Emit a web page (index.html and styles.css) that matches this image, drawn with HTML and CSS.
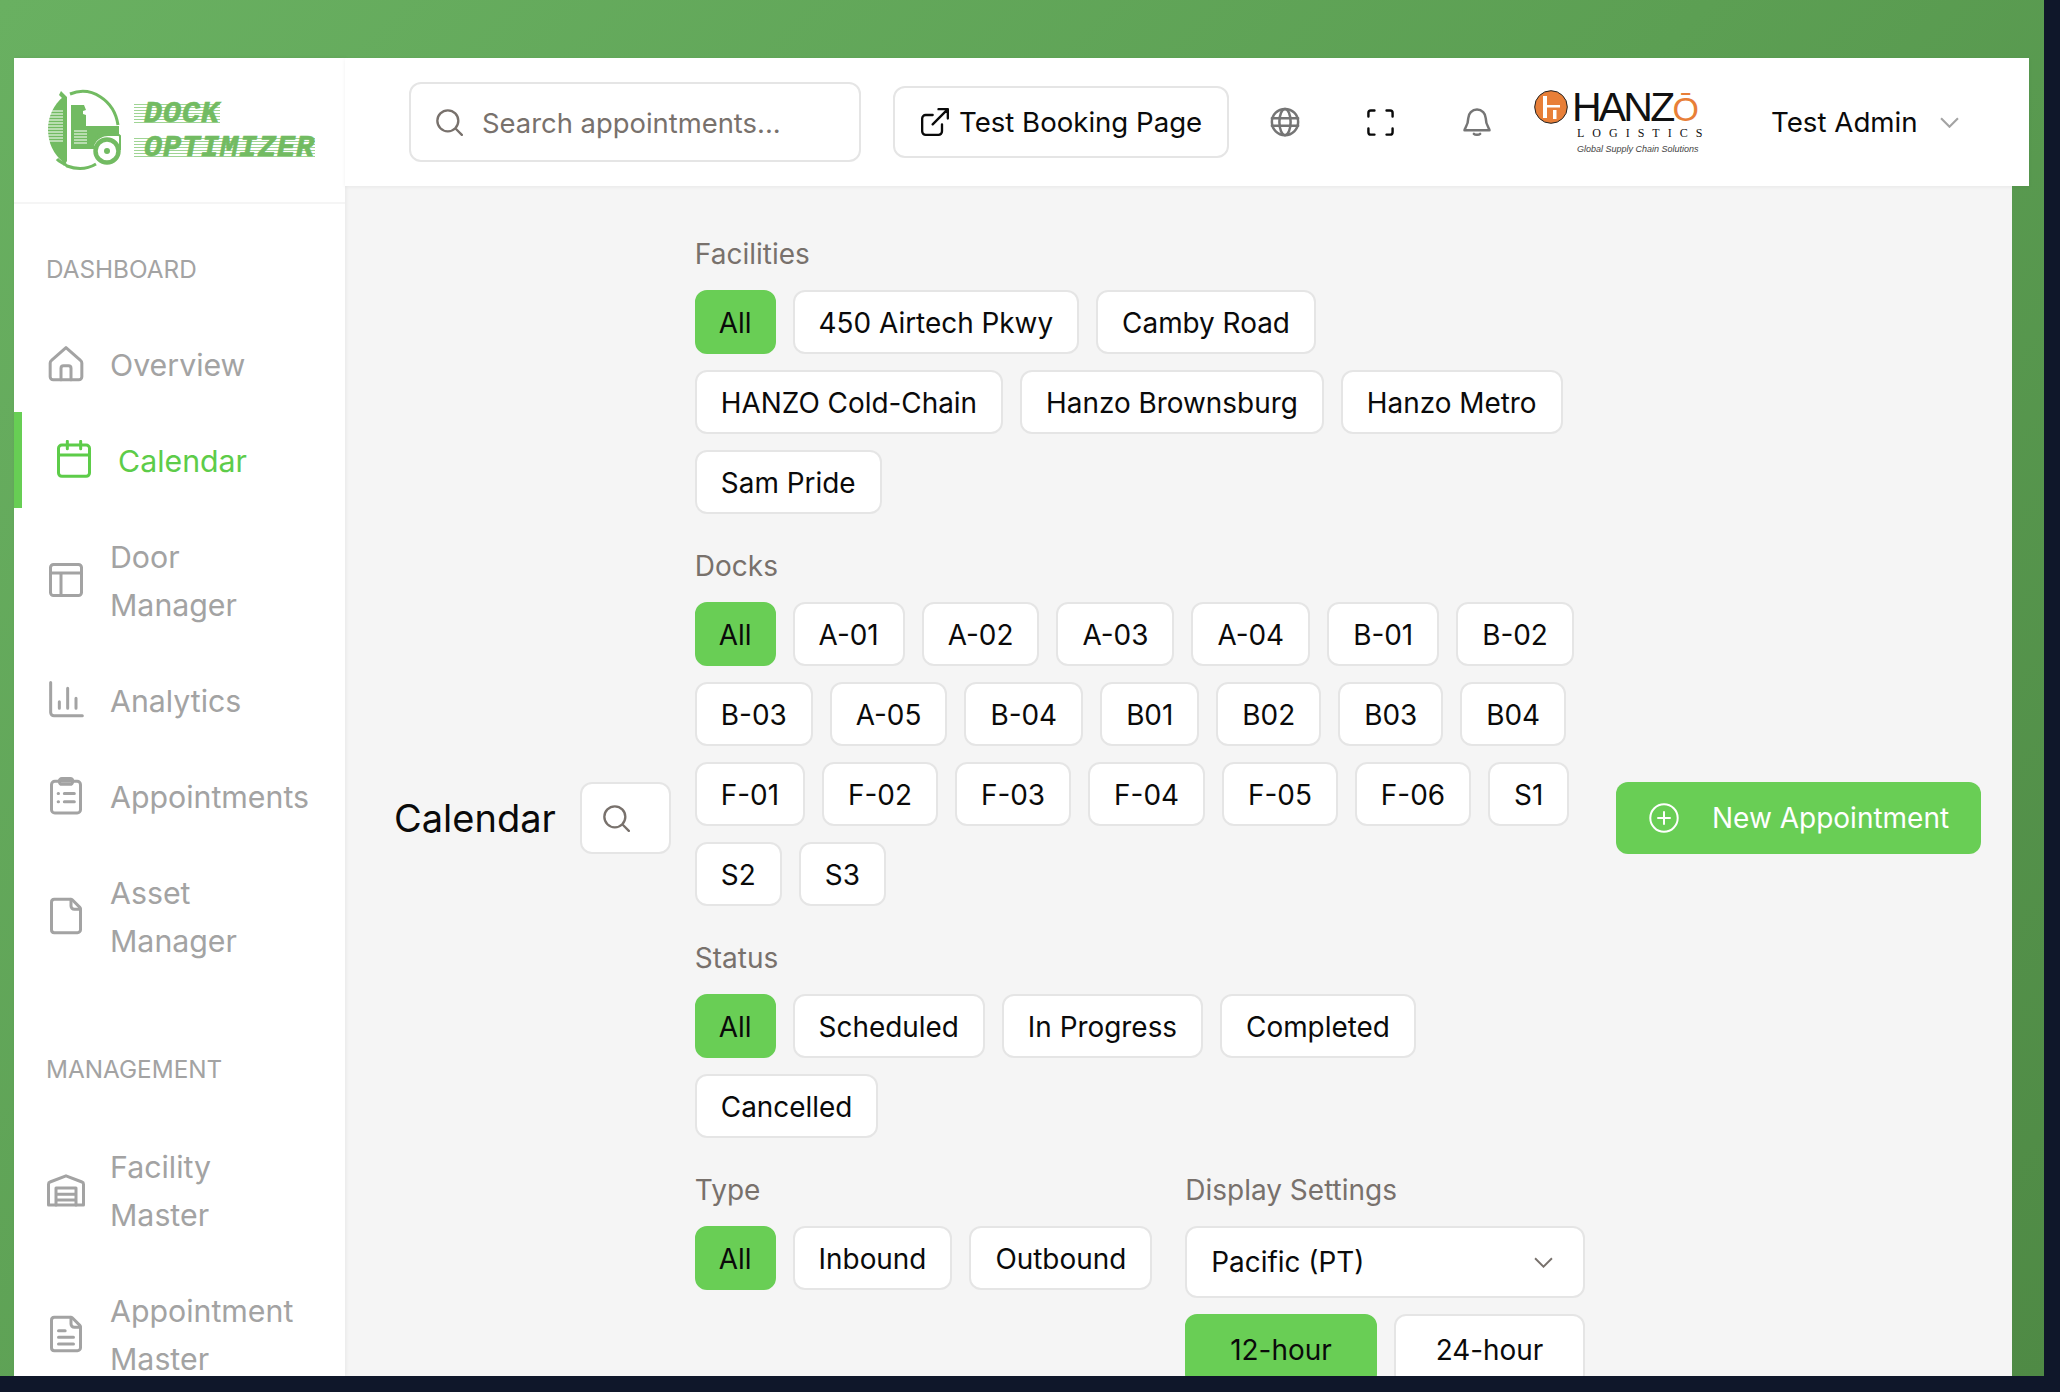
FILE: index.html
```html
<!DOCTYPE html>
<html lang="en">
<head>
<meta charset="utf-8">
<title>Calendar - Dock Optimizer</title>
<link rel="stylesheet" href="styles.css">
</head>
<body>
<div class="window">
  <aside class="sidebar">
    <div class="brand">
      <svg class="truck" viewBox="0 0 76 82" fill="none">
        <path d="M24 5A36 40 0 0 1 72 36" stroke="#72bb62" stroke-width="3"/>
        <path d="M17 8A36 40 0 0 0 17 73z" fill="#72bb62"/>
        <path d="M15 2l6 6v64l-3 5-2-3 1-3V10l-4-4z" fill="#72bb62"/>
        <path d="M3 22h14M2 25h15M2 28h15M1 31h16M1 34h16M1 37h16M1 40h16M1 43h16M1 46h16M2 49h15M2 52h15" stroke="#fff" stroke-width="1"/>
        <path d="M25 16h13l2 5-3 1v3l3 1v11h33v10H64a15 15 0 0 0-16 10v3H25z" fill="#72bb62"/>
        <path d="M28 42h13M28 45h13M28 48h13M28 51h13M28 54h13" stroke="#fff" stroke-width="1"/>
        <path d="M50 48a16 16 0 0 1 24-1v14" stroke="#72bb62" stroke-width="2"/>
        <circle cx="61" cy="62" r="11.500" stroke="#72bb62" stroke-width="4.500"/>
        <circle cx="61" cy="62" r="3" fill="#72bb62"/>
        <path d="M11 70c3 4 8 4 10 7 8 3 19 4 29-2" stroke="#72bb62" stroke-width="3"/>
      </svg>
      <div class="brand-text"><span class="brand-line">DOCK</span><span class="brand-line">OPTIMIZER</span></div>
    </div>
    <div class="nav-label">DASHBOARD</div>
    <nav class="nav">
      <a class="nav-item"><svg class="nav-icon" viewBox="0 0 24 24"><path d="M3.300 9.800 12 2.200l8.700 7.600c.5.4.8 1 .8 1.600v8.300a1.800 1.800 0 0 1-1.800 1.800H4.300a1.800 1.800 0 0 1-1.800-1.800v-8.300c0-.6.300-1.200.800-1.600z"/><path d="M9 21.500v-7a1.500 1.500 0 0 1 1.500-1.500h3a1.500 1.500 0 0 1 1.500 1.500v7"/></svg><span class="nav-text">Overview</span></a>
      <a class="nav-item is-active"><svg class="nav-icon" viewBox="0 0 24 24"><rect x="2.700" y="3" width="18.600" height="18.800" rx="2"/><path d="M2.700 9h18.600M8 .8v4.400M16 .8v4.400"/></svg><span class="nav-text">Calendar</span></a>
      <a class="nav-item"><svg class="nav-icon" viewBox="0 0 24 24"><rect x="2.700" y="2.700" width="18.600" height="18.600" rx="1.800"/><path d="M2.700 7.800h18.600M9 7.800v13.500"/></svg><span class="nav-text">Door<br>Manager</span></a>
      <a class="nav-item"><svg class="nav-icon" viewBox="0 0 24 24"><path d="M2.800 1.500v18a2 2 0 0 0 2 2h17M8 17v-4M13 17V5M18 17v-6"/></svg><span class="nav-text">Analytics</span></a>
      <a class="nav-item"><svg class="nav-icon" viewBox="0 0 24 24"><rect x="3.300" y="3.200" width="17.400" height="19" rx="2"/><rect x="8" y="1.500" width="8" height="3.500" rx="1.500"/><path d="M7.300 10.500h.2M7.300 15.500h.2M11 10.500h6M11 15.500h6"/></svg><span class="nav-text">Appointments</span></a>
      <a class="nav-item"><svg class="nav-icon" viewBox="0 0 24 24"><path d="M5 2h9.800c.4 0 .8.200 1.100.400l4.400 4.400c.3.300.4.700.4 1.100v12.300a1.800 1.800 0 0 1-1.800 1.800H5a1.800 1.800 0 0 1-1.700-1.800V3.800A1.800 1.800 0 0 1 5 2z"/><path d="M15 2v4a2 2 0 0 0 2 2h3.700"/></svg><span class="nav-text">Asset<br>Manager</span></a>
    </nav>
    <div class="nav-label nav-label-lower">MANAGEMENT</div>
    <nav class="nav">
      <a class="nav-item"><svg class="nav-icon" viewBox="0 0 24 24"><path d="M1.500 21V8.500c0-.6.300-1.100.900-1.300L12 3.500l9.600 3.700c.6.200.9.700.9 1.300V21z"/><path d="M6 21V10.800h12V21M6 14.500h12M6 18h12"/></svg><span class="nav-text">Facility<br>Master</span></a>
      <a class="nav-item"><svg class="nav-icon" viewBox="0 0 24 24"><path d="M5 2h9.800c.4 0 .8.200 1.100.400l4.400 4.400c.3.300.4.700.4 1.100v12.300a1.800 1.800 0 0 1-1.800 1.800H5a1.800 1.800 0 0 1-1.700-1.800V3.800A1.800 1.800 0 0 1 5 2z"/><path d="M15 2v4a2 2 0 0 0 2 2h3.700M7.500 10h4M7.500 14h9M7.500 18h9"/></svg><span class="nav-text">Appointment<br>Master</span></a>
    </nav>
  </aside>
  <div class="main">
    <header class="topbar">
      <div class="search">
        <svg class="search-icon" viewBox="0 0 24 24"><circle cx="11" cy="11" r="9"/><path d="m18 18 5 5"/></svg>
        <span class="search-text">Search appointments...</span>
      </div>
      <a class="booking"><svg class="booking-icon" viewBox="0 0 24 24"><path d="M18 14v6a3 3 0 0 1-3 3H4a3 3 0 0 1-3-3V9a3 3 0 0 1 3-3h6M15 1h8v8M23 1 10 14"/></svg><span>Test Booking Page</span></a>
      <svg class="top-icon globe" viewBox="0 0 24 24"><circle cx="12" cy="12" r="10.500"/><ellipse cx="12" cy="12" rx="4.500" ry="10.500"/><path d="M1.500 9h21M1.500 15h21"/></svg>
      <svg class="top-icon frame" viewBox="0 0 24 24"><path d="M2 7V4a2 2 0 0 1 2-2h3M17 2h3a2 2 0 0 1 2 2v3M22 17v3a2 2 0 0 1-2 2h-3M7 22H4a2 2 0 0 1-2-2v-3"/></svg>
      <svg class="top-icon bell" viewBox="0 0 24 24"><path d="M12 2a7 7 0 0 0-7 7c0 6-3 8-3 9.500h20C22 17 19 15 19 9a7 7 0 0 0-7-7z"/><path d="M9.500 21.500c1 1 4 1 5 0"/></svg>
      <div class="hanzo">
        <svg class="hanzo-mark" viewBox="0 0 34 34"><circle cx="17" cy="17" r="16.300" fill="#e87f38" stroke="#222" stroke-width="1"/><path d="M9 6h4v22H9zM13 15h13v2.500H13zM19 20h3.500v9H19z" fill="#fff"/></svg>
        <div class="hanzo-words">
          <div class="hanzo-name">HANZ<span class="hanzo-o">Ō</span></div>
          <div class="hanzo-sub">LOGISTICS</div>
          <div class="hanzo-tag">Global Supply Chain Solutions</div>
        </div>
      </div>
      <div class="user"><span>Test Admin</span><svg class="user-chev" viewBox="0 0 18 10"><path d="M1 1l8 8 8-8"/></svg></div>
    </header>
    <main class="content">
      <div class="page-row">
        <h1 class="title">Calendar</h1>
        <button class="icon-btn"><svg class="search-icon" viewBox="0 0 24 24"><circle cx="11" cy="11" r="9"/><path d="m18 18 5 5"/></svg></button>
        <div class="filters">
          <section class="group">
            <div class="group-label">Facilities</div>
            <div class="chips"><button class="chip is-on">All</button><button class="chip">450 Airtech Pkwy</button><button class="chip">Camby Road</button><button class="chip">HANZO Cold-Chain</button><button class="chip">Hanzo Brownsburg</button><button class="chip">Hanzo Metro</button><button class="chip">Sam Pride</button></div>
          </section>
          <section class="group">
            <div class="group-label">Docks</div>
            <div class="chips"><button class="chip is-on">All</button><button class="chip">A-01</button><button class="chip">A-02</button><button class="chip">A-03</button><button class="chip">A-04</button><button class="chip">B-01</button><button class="chip">B-02</button><button class="chip">B-03</button><button class="chip">A-05</button><button class="chip">B-04</button><button class="chip">B01</button><button class="chip">B02</button><button class="chip">B03</button><button class="chip">B04</button><button class="chip">F-01</button><button class="chip">F-02</button><button class="chip">F-03</button><button class="chip">F-04</button><button class="chip">F-05</button><button class="chip">F-06</button><button class="chip">S1</button><button class="chip">S2</button><button class="chip">S3</button></div>
          </section>
          <section class="group">
            <div class="group-label">Status</div>
            <div class="chips"><button class="chip is-on">All</button><button class="chip">Scheduled</button><button class="chip">In Progress</button><button class="chip">Completed</button><button class="chip">Cancelled</button></div>
          </section>
          <div class="split">
            <section class="group">
              <div class="group-label">Type</div>
              <div class="chips"><button class="chip is-on">All</button><button class="chip">Inbound</button><button class="chip">Outbound</button></div>
            </section>
            <section class="group display">
              <div class="group-label">Display Settings</div>
              <div class="select"><span>Pacific (PT)</span><svg class="select-chev" viewBox="0 0 18 10"><path d="M1 1l8 8 8-8"/></svg></div>
              <div class="hours"><button class="chip hour is-on">12-hour</button><button class="chip hour">24-hour</button></div>
            </section>
          </div>
        </div>
        <button class="new-btn"><svg class="plus" viewBox="0 0 30 30"><circle cx="15" cy="15" r="13.700"/><path d="M15 9v12M9 15h12"/></svg><span>New Appointment</span></button>
      </div>
    </main>
  </div>
</div>
</body>
</html>
```
FILE: styles.css
```css
* { box-sizing: border-box; }
html, body { margin: 0; height: 100%; }
body {
  width: 2060px;
  height: 1392px;
  background: #0f172a;
  overflow: hidden;
  font-family: Inter, "Liberation Sans", sans-serif;
}
.window {
  width: 2044px;
  height: 1376px;
  padding: 58px 15px 0 14px;
  background: linear-gradient(135deg, #69b061 0%, #5c9f53 50%, #4f8a45 100%);
  display: flex;
  overflow: hidden;
}
.sidebar {
  width: 331px;
  flex: none;
  background: #fff;
  box-shadow: 1px 0 4px rgba(0,0,0,.06);
  position: relative;
  z-index: 1;
}
.brand {
  height: 146px;
  padding: 31px 0 0 32px;
  border-bottom: 2px solid #f5f5f5;
  display: flex;
  gap: 12px;
}
.truck { width: 76px; height: 82px; flex: none; }
.brand-text { display: flex; flex-direction: column; align-items: flex-start; gap: 14px; padding-top: 15px; }
.brand-line {
  height: 20px;
  padding-left: 10px;
  font: italic 700 30px/20px "Liberation Mono", monospace;
  letter-spacing: 1px;
  color: #72bb62;
  -webkit-text-stroke: .7px #72bb62;
  background: repeating-linear-gradient(to bottom, #9fd494 0 1px, transparent 1px 3px);
}
.nav-label {
  margin-top: 49px;
  height: 32px;
  padding-left: 32px;
  font-size: 24.300px;
  line-height: 32px;
  color: #a3a3a3;
  margin-bottom: 31px;
}
.nav-label-lower { margin-top: 65px; margin-bottom: 33px; }
.nav { display: flex; flex-direction: column; }
.nav-item {
  display: flex;
  align-items: center;
  gap: 24px;
  padding: 24px 0 24px 32px;
  font-size: 30.300px;
  line-height: 48px;
  color: #a3a3a3;
}
.nav-text { position: relative; top: 1px; }
.nav-item.is-active {
  color: #5dcc49;
  border-left: 8px solid #67ce54;
}
.nav-icon {
  width: 40px;
  height: 40px;
  flex: none;
  fill: none;
  stroke: currentColor;
  stroke-width: 1.800;
  stroke-linecap: round;
  stroke-linejoin: round;
}
.main { flex: 1; min-width: 0; display: flex; flex-direction: column; }
.topbar {
  height: 128px;
  flex: none;
  background: #fff;
  display: flex;
  align-items: center;
  padding-left: 64px;
  box-shadow: 0 1px 4px rgba(0,0,0,.06);
  position: relative;
  z-index: 1;
}
.search {
  width: 452px;
  height: 80px;
  border: 2px solid #e5e5e5;
  border-radius: 12px;
  display: flex;
  align-items: center;
  gap: 19px;
  padding-left: 24px;
}
.search-icon {
  width: 28px;
  height: 28px;
  fill: none;
  stroke: #78716c;
  stroke-width: 2;
  stroke-linecap: round;
}
.search-text { font-size: 27.400px; color: #78716c; padding-top: 2px; }
.booking {
  margin-left: 32px;
  width: 336px;
  height: 72px;
  border: 2px solid #e5e5e5;
  border-radius: 12px;
  display: flex;
  align-items: center;
  gap: 10px;
  padding-left: 26px;
  font-size: 27.600px;
  color: #0a0a0a;
}
.booking-icon {
  width: 28px;
  height: 28px;
  flex: none;
  fill: none;
  stroke: #0a0a0a;
  stroke-width: 2;
  stroke-linecap: round;
  stroke-linejoin: round;
}
.top-icon {
  width: 30px;
  height: 30px;
  flex: none;
  fill: none;
  stroke: #757575;
  stroke-width: 2;
  stroke-linecap: round;
  stroke-linejoin: round;
}
.globe { margin-left: 41px; }
.frame { margin-left: 66px; stroke: #0a0a0a; width: 29px; height: 29px; }
.bell { margin-left: 67px; }
.hanzo { margin-left: 42px; width: 172px; display: flex; gap: 4px; flex: none; }
.hanzo-mark { width: 34px; height: 34px; flex: none; }
.hanzo-words { display: flex; flex-direction: column; align-items: flex-start; color: #111; }
.hanzo-name {
  font: 41px/34px "Liberation Sans", sans-serif;
  letter-spacing: -2.800px;
  height: 35px;
}
.hanzo-o { color: #e87f38; font-size: 34px; letter-spacing: 0; }
.hanzo-sub {
  font: 12px/14px "Liberation Serif", serif;
  letter-spacing: 8px;
  padding-left: 5px;
  height: 14px;
  margin-top: 1px;
}
.hanzo-tag {
  font: italic 9px/12px "Liberation Sans", sans-serif;
  color: #444;
  padding-left: 5px;
  margin-top: 3px;
  white-space: nowrap;
}
.user {
  margin-left: 65px;
  display: flex;
  align-items: center;
  gap: 22px;
  font-size: 27.700px;
  color: #0a0a0a;
}
.user-chev { width: 19px; height: 11px; fill: none; stroke: #a3a3a3; stroke-width: 2; }
.content {
  flex: 1;
  min-height: 0;
  margin-right: 17px;
  padding: 52px 31px 0 49px;
  background: #f5f5f5;
}
.page-row { display: flex; align-items: center; gap: 24px; }
.title { margin: 0; font-size: 38px; font-weight: 400; color: #0a0a0a; white-space: nowrap; }
.icon-btn {
  width: 91px;
  height: 72px;
  flex: none;
  background: #fff;
  border: 2px solid #e5e5e5;
  border-radius: 12px;
  padding: 0 0 0 20px;
  display: flex;
  align-items: center;
}
.filters { flex: 1; min-width: 0; display: flex; flex-direction: column; gap: 36px; padding-bottom: 12px; }
.group-label { font-size: 28px; line-height: 33px; color: #78716c; margin-bottom: 19px; }
.chips { display: flex; flex-wrap: wrap; gap: 16px 17px; }
.chip {
  height: 64px;
  padding: 1px 24px 0;
  background: #fff;
  border: 2px solid #e5e5e5;
  border-radius: 12px;
  font: 27.900px Inter, "Liberation Sans", sans-serif;
  color: #0a0a0a;
  white-space: nowrap;
}
.chip.is-on { background: #69ce55; border-color: #69ce55; padding: 1px 22px 0; }
.split { display: flex; gap: 33px; }
.display { width: 400px; flex: none; }
.select {
  height: 72px;
  background: #fff;
  border: 2px solid #e5e5e5;
  border-radius: 12px;
  padding: 0 30px 0 24px;
  display: flex;
  align-items: center;
  justify-content: space-between;
  font-size: 27.900px;
  color: #0a0a0a;
}
.select-chev { width: 19px; height: 11px; fill: none; stroke: #78716c; stroke-width: 1.800; }
.hours { display: flex; gap: 17px; margin-top: 16px; }
.hour { height: 72px; flex: 1; padding: 0; }
.chip.hour.is-on { padding: 0; }
.new-btn {
  height: 72px;
  flex: none;
  width: 365px;
  background: #69ce55;
  border: 0;
  border-radius: 12px;
  padding: 0 0 0 33px;
  display: flex;
  align-items: center;
  gap: 33px;
  font: 28px Inter, "Liberation Sans", sans-serif;
  color: #fff;
}
.plus { width: 30px; height: 30px; flex: none; fill: none; stroke: #fff; stroke-width: 2; stroke-linecap: round; }
```
